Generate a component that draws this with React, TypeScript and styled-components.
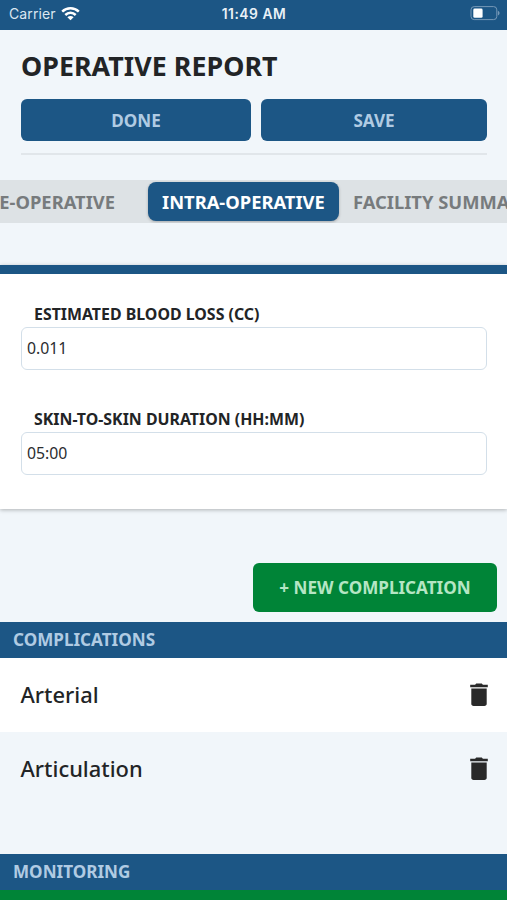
import React from "react";
import styled, { createGlobalStyle } from "styled-components";

const blue = "#1c5685";
const green = "#008437";
const pale = "#f1f6fa";

const GlobalStyle = createGlobalStyle`
  * { box-sizing: border-box; }
  html, body { margin: 0; padding: 0; }
  body { background: ${pale}; overflow: hidden; }
  button, input { font-family: inherit; margin: 0; }
`;

const Screen = styled.main`
  width: 507px;
  height: 900px;
  overflow: hidden;
  display: flex;
  flex-direction: column;
  background: ${pale};
  color: #222426;
  font-family: "Noto Sans", sans-serif;
`;

const StatusBar = styled.header`
  height: 30px;
  flex: none;
  display: grid;
  grid-template-columns: 1fr auto 1fr;
  align-items: center;
  padding: 0 7px 3px 9px;
  background: ${blue};
  color: #fff;
  font-family: Inter, sans-serif;
  font-size: 14px;
  line-height: 20px;
`;

const Carrier = styled.div`
  display: flex;
  align-items: center;
  gap: 5px;
  color: #dbe7f1;
  letter-spacing: 0.1px;
`;

const Clock = styled.time`
  font-size: 13.8px;
  font-weight: 600;
  letter-spacing: 0.55px;
  margin-right: 1px;
  color: #e9f1f7;
`;

const BatterySlot = styled.div`
  display: flex;
  justify-content: flex-end;
`;

const Heading = styled.section`
  flex: none;
  height: 125px;
  margin: 0 20px 0 21px;
  border-bottom: 2px solid #e1e6ea;
`;

const Title = styled.h1`
  margin: 0;
  height: 69px;
  padding-top: 18px;
  font-size: 26.8px;
  line-height: 36px;
  font-weight: 700;
  letter-spacing: 0.05px;
  white-space: nowrap;
`;

const Actions = styled.div`
  display: grid;
  grid-template-columns: 230px 226px;
  gap: 10px;
`;

const ActionButton = styled.button`
  height: 42px;
  border: 0;
  border-radius: 6px;
  padding: 1px 0 0;
  background: ${blue};
  color: #b0cbe3;
  font-size: 17.1px;
  font-weight: 700;
`;

const TabStrip = styled.nav`
  flex: none;
  height: 43px;
  margin-top: 25px;
  display: flex;
  align-items: center;
  justify-content: flex-start;
  background: #dde2e5;
  overflow: hidden;
`;

const Tab = styled.button<{ $active?: boolean; $width: number }>`
  flex: none;
  width: ${(p) => p.$width}px;
  height: 39px;
  border: 0;
  border-radius: 8px;
  padding: 0 14px;
  background: ${(p) => (p.$active ? blue : "transparent")};
  color: ${(p) => (p.$active ? "#fff" : "#777b7d")};
  box-shadow: ${(p) => (p.$active ? "0 1px 3px rgba(0, 0, 0, 0.25)" : "none")};
  font-size: 18.35px;
  line-height: 39px;
  font-weight: 700;
  text-align: left;
  white-space: nowrap;
`;

const LeadingTab = styled(Tab)`
  display: flex;
  justify-content: flex-end;
  padding: 0 33px 0 0;
`;

const FormCard = styled.section`
  flex: none;
  height: 244px;
  margin-top: 42px;
  border-top: 9px solid ${blue};
  padding: 27px 20px 0 21px;
  background: #fff;
  box-shadow: 0 1px 4px rgba(0, 0, 0, 0.28);
`;

const Field = styled.label`
  display: block;
  height: 105px;
`;

const FieldLabel = styled.span`
  display: block;
  height: 26px;
  padding-left: 13px;
  font-size: 15.9px;
  line-height: 26px;
  font-weight: 700;
`;

const FieldInput = styled.input`
  display: block;
  width: 100%;
  height: 43px;
  border: 1px solid #d3dfe9;
  border-radius: 6px;
  padding: 0 5px 2px;
  background: #fff;
  color: #2b2d2f;
  font-size: 15.8px;
  outline: 0;
`;

const AddRow = styled.div`
  flex: none;
  height: 113px;
  display: flex;
  justify-content: flex-end;
  padding: 54px 10px 0 0;
`;

const AddButton = styled(ActionButton)`
  width: 244px;
  height: 49px;
  padding: 0 0 1px;
  background: ${green};
  color: #b5e6c4;
`;

const SectionHeader = styled.h2`
  flex: none;
  height: 36px;
  margin: 0;
  padding-left: 13px;
  background: ${blue};
  color: #b0cbe3;
  font-size: 17.1px;
  line-height: 36px;
  font-weight: 700;
`;

const List = styled.ul`
  flex: none;
  height: 196px;
  margin: 0;
  padding: 0;
  list-style: none;
`;

const Item = styled.li`
  height: 74px;
  display: flex;
  align-items: center;
  justify-content: space-between;
  padding: 0 19px 0 20.5px;
  font-size: 21.9px;
  line-height: 30px;
  font-weight: 500;
  &:nth-child(odd) { background: #fff; }
`;

const ItemName = styled.span`
  padding-bottom: 1px;
`;

const IconButton = styled.button`
  display: flex;
  border: 0;
  padding: 0;
  background: none;
  color: #292929;
`;

const GreenPanel = styled.div`
  flex: 1;
  background: ${green};
`;

const WifiIcon = () => (
  <svg width="19" height="14" viewBox="0 0 19 14" fill="none" stroke="#fff" strokeWidth="2.5">
    <path d="M1.2 4.7C5.9.2 13.1.2 17.8 4.7" />
    <path d="M4.3 8c3-2.9 7.4-2.9 10.4 0" />
    <path d="M6.4 10.3c1.8-1.6 4.4-1.6 6.2 0l-3.1 3Z" fill="#fff" stroke="none" />
  </svg>
);

const BatteryIcon = () => (
  <svg width="31" height="15" viewBox="0 0 31 15">
    <rect x="2" y=".6" width="25.8" height="13" rx="3.2" fill="none" stroke="#7799b8" />
    <rect x="4.3" y="2.6" width="9.3" height="9.2" rx="1.4" fill="#fff" />
    <path d="M28.9 4.7c2.2.8 2.2 4 0 4.9Z" fill="#7799b8" />
  </svg>
);

const TrashIcon = () => (
  <svg width="18" height="24" viewBox="0 0 18 24" fill="currentColor">
    <path d="M.2 1.8h4.9L6.2.6h5.6l1.1 1.2h4.9v2.5H.2Z" />
    <path d="M1.3 5.6h15.4v15.1c0 1.4-.9 2.2-2.3 2.2H3.6c-1.4 0-2.3-.8-2.3-2.2Z" />
  </svg>
);

const complications = ["Arterial", "Articulation"];

export default function App() {
  return (
    <>
      <GlobalStyle />
      <Screen>
        <StatusBar>
          <Carrier><span>Carrier</span><WifiIcon /></Carrier>
          <Clock>11:49 AM</Clock>
          <BatterySlot><BatteryIcon /></BatterySlot>
        </StatusBar>
        <Heading>
          <Title>OPERATIVE REPORT</Title>
          <Actions>
            <ActionButton>DONE</ActionButton>
            <ActionButton>SAVE</ActionButton>
          </Actions>
        </Heading>
        <TabStrip>
          <LeadingTab $width={148}>E-OPERATIVE</LeadingTab>
          <Tab $active $width={191}>INTRA-OPERATIVE</Tab>
          <Tab $width={220}>FACILITY SUMMARY</Tab>
        </TabStrip>
        <FormCard>
          <Field>
            <FieldLabel>ESTIMATED BLOOD LOSS (CC)</FieldLabel>
            <FieldInput defaultValue="0.011" />
          </Field>
          <Field>
            <FieldLabel>SKIN-TO-SKIN DURATION (HH:MM)</FieldLabel>
            <FieldInput defaultValue="05:00" />
          </Field>
        </FormCard>
        <AddRow><AddButton>+ NEW COMPLICATION</AddButton></AddRow>
        <SectionHeader>COMPLICATIONS</SectionHeader>
        <List>
          {complications.map((name) => (
            <Item key={name}>
              <ItemName>{name}</ItemName>
              <IconButton aria-label={`Delete ${name}`}><TrashIcon /></IconButton>
            </Item>
          ))}
        </List>
        <SectionHeader>MONITORING</SectionHeader>
        <GreenPanel />
      </Screen>
    </>
  );
}
